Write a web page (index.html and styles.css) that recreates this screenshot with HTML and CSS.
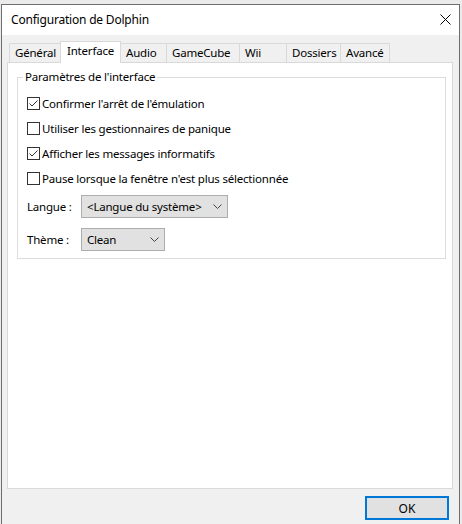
FILE: index.html
```html
<!DOCTYPE html>
<html lang="fr">
<head>
    <meta charset="UTF-8">
    <meta name="viewport" content="width=device-width, initial-scale=1.0">
    <title>Configuration de Dolphin</title>
    <link rel="stylesheet" href="styles.css">
</head>
<body>
    <div class="window">
        <div class="titlebar">
            <span class="title">Configuration de Dolphin</span>
            <span class="close">
                <svg width="11" height="11" viewBox="0 0 11 11"><path d="M0.5 0.5 L10.5 10.5 M10.5 0.5 L0.5 10.5" stroke="#000" stroke-width="1" fill="none"/></svg>
            </span>
        </div>
        <div class="content">
            <div class="tabs">
                <div class="tab tab-general">Général</div>
                <div class="tab tab-interface active">Interface</div>
                <div class="tab tab-audio">Audio</div>
                <div class="tab tab-gamecube">GameCube</div>
                <div class="tab tab-wii">Wii</div>
                <div class="tab tab-dossiers">Dossiers</div>
                <div class="tab tab-avance">Avancé</div>
            </div>
            <div class="pane">
                <fieldset class="group">
                    <legend>Paramètres de l'interface</legend>
                    <div class="check-row">
                        <span class="checkbox checked">
                            <svg width="11" height="11" viewBox="0 0 11 11"><path d="M1.5 5.5 L4 8 L9.5 2.5" stroke="#333" stroke-width="1" fill="none"/></svg>
                        </span>
                        <span>Confirmer l'arrêt de l'émulation</span>
                    </div>
                    <div class="check-row">
                        <span class="checkbox"></span>
                        <span>Utiliser les gestionnaires de panique</span>
                    </div>
                    <div class="check-row">
                        <span class="checkbox checked">
                            <svg width="11" height="11" viewBox="0 0 11 11"><path d="M1.5 5.5 L4 8 L9.5 2.5" stroke="#333" stroke-width="1" fill="none"/></svg>
                        </span>
                        <span>Afficher les messages informatifs</span>
                    </div>
                    <div class="check-row">
                        <span class="checkbox"></span>
                        <span>Pause lorsque la fenêtre n'est plus sélectionnée</span>
                    </div>
                    <div class="form-row first">
                        <span class="label">Langue :</span>
                        <div class="combo combo-lang">
                            <span>&lt;Langue du système&gt;</span>
                            <svg width="9" height="5" viewBox="0 0 9 5"><path d="M0.5 0.5 L4.5 4.5 L8.5 0.5" stroke="#444" stroke-width="1" fill="none"/></svg>
                        </div>
                    </div>
                    <div class="form-row">
                        <span class="label">Thème :</span>
                        <div class="combo combo-theme">
                            <span>Clean</span>
                            <svg width="9" height="5" viewBox="0 0 9 5"><path d="M0.5 0.5 L4.5 4.5 L8.5 0.5" stroke="#444" stroke-width="1" fill="none"/></svg>
                        </div>
                    </div>
                </fieldset>
            </div>
            <div class="footer">
                <button class="ok">OK</button>
            </div>
        </div>
    </div>
</body>
</html>
```

FILE: styles.css
```css
* {
    box-sizing: border-box;
}
body {
    margin: 0;
    background-color: #ebebeb;
    font-family: "Segoe UI", "Noto Sans", sans-serif;
    font-size: 11.5px;
    letter-spacing: -0.2px;
    color: #000;
    overflow: hidden;
}
.window {
    margin: 4px 0 0 1px;
    width: 459px;
    height: 520px;
    border: 1px solid #6e6e6e;
    border-bottom: none;
    background: #f0f0f0;
}
.titlebar {
    height: 30px;
    background: white;
    display: flex;
    align-items: center;
    justify-content: space-between;
    padding: 0 8px 0 9px;
}
.title {
    font-size: 12px;
    margin-top: -1px;
}
.close {
    display: flex;
    margin-top: -1px;
}
.content {
    padding-top: 6px;
}
.tabs {
    display: flex;
    align-items: flex-end;
    height: 22px;
    margin: 0 0 -1px 7px;
    position: relative;
    z-index: 1;
}
.tab {
    height: 20px;
    line-height: 18px;
    padding-left: 5px;
    border: 1px solid #d9d9d9;
    border-right: none;
    background: #f0f0f0;
}
.tab.active {
    height: 22px;
    line-height: 18px;
    background: white;
    border-right: 1px solid #d9d9d9;
    border-bottom: none;
    padding-left: 6px;
}
.tab-avance {
    border-right: 1px solid #d9d9d9;
}
.tab-general { width: 51px; }
.tab-interface { width: 61px; }
.tab-audio { width: 45px; border-left: none; }
.tab-gamecube { width: 73px; }
.tab-wii { width: 47px; }
.tab-dossiers { width: 54px; }
.tab-avance { width: 50px; }
.pane {
    margin-left: 5px;
    width: 446px;
    height: 427px;
    background: white;
    border: 1px solid #d9d9d9;
    padding: 6px 6px 0 9px;
}
.group {
    margin: 0;
    border: 1px solid #dcdcdc;
    padding: 6px 8px 7px 9px;
}
.group legend {
    line-height: 16px;
    padding: 0 2px;
    margin-left: -4px;
}
.check-row {
    height: 25px;
    display: flex;
    align-items: center;
    gap: 2px;
}
.checkbox {
    width: 13px;
    height: 13px;
    border: 1px solid #333;
    background: white;
    display: flex;
    align-items: center;
    justify-content: center;
    flex-shrink: 0;
}
.form-row {
    display: flex;
    align-items: center;
    margin-top: 10px;
}
.form-row.first {
    margin-top: 4px;
}
.label {
    width: 54px;
}
.combo {
    height: 23px;
    border: 1px solid #adadad;
    background: #e1e1e1;
    display: flex;
    align-items: center;
    justify-content: space-between;
    padding: 0 5px 0 5px;
}
.combo-lang { width: 147px; }
.combo-theme { width: 84px; }
.footer {
    display: flex;
    justify-content: flex-end;
    padding: 7px 10px 0 0;
}
.ok {
    width: 84px;
    height: 24px;
    border: 2px solid #0078d7;
    background: #e1e1e1;
    font-family: inherit;
    font-size: 12px;
    padding: 0;
}
```
